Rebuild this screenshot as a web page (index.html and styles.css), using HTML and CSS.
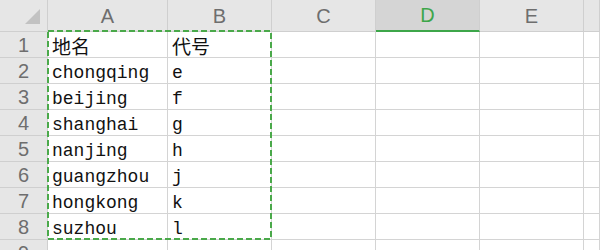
FILE: index.html
```html
<!DOCTYPE html>
<html lang="zh">
  <head>
    <meta charset="UTF-8" />
    <title>Sheet</title>
    <link rel="stylesheet" href="styles.css">
  </head>
  <body>
    <div class="sheet">
      <div class="grid">
        <div class="corner"><span class="corner-mark"></span></div>
        <div class="col-head">A</div>
        <div class="col-head">B</div>
        <div class="col-head">C</div>
        <div class="col-head active">D</div>
        <div class="col-head">E</div>
        <div class="col-head"></div>

        <div class="row-head">1</div>
        <div class="cell cjk">地名</div><div class="cell cjk">代号</div>
        <div class="cell"></div><div class="cell"></div><div class="cell"></div><div class="cell"></div>

        <div class="row-head">2</div>
        <div class="cell">chongqing</div><div class="cell">e</div>
        <div class="cell"></div><div class="cell"></div><div class="cell"></div><div class="cell"></div>

        <div class="row-head">3</div>
        <div class="cell">beijing</div><div class="cell">f</div>
        <div class="cell"></div><div class="cell"></div><div class="cell"></div><div class="cell"></div>

        <div class="row-head">4</div>
        <div class="cell">shanghai</div><div class="cell">g</div>
        <div class="cell"></div><div class="cell"></div><div class="cell"></div><div class="cell"></div>

        <div class="row-head">5</div>
        <div class="cell">nanjing</div><div class="cell">h</div>
        <div class="cell"></div><div class="cell"></div><div class="cell"></div><div class="cell"></div>

        <div class="row-head">6</div>
        <div class="cell">guangzhou</div><div class="cell">j</div>
        <div class="cell"></div><div class="cell"></div><div class="cell"></div><div class="cell"></div>

        <div class="row-head">7</div>
        <div class="cell">hongkong</div><div class="cell">k</div>
        <div class="cell"></div><div class="cell"></div><div class="cell"></div><div class="cell"></div>

        <div class="row-head">8</div>
        <div class="cell">suzhou</div><div class="cell">l</div>
        <div class="cell"></div><div class="cell"></div><div class="cell"></div><div class="cell"></div>

        <div class="row-head">9</div>
        <div class="cell"></div><div class="cell"></div>
        <div class="cell"></div><div class="cell"></div><div class="cell"></div><div class="cell"></div>
      </div>

      <!-- copy marquee around A1:B8 -->
      <svg class="marquee" width="226" height="211" viewBox="0 0 226 211">
        <rect x="1" y="1" width="223" height="208" fill="none"
              stroke="#4aa94a" stroke-width="2" stroke-dasharray="6 3" />
      </svg>
    </div>
  </body>
</html>
```

FILE: styles.css
```css
body {
  margin: 0;
  background: #ffffff;
  overflow: hidden;
}

.sheet {
  position: relative;
  width: 600px;
  height: 250px;
  overflow: hidden;
}

.grid {
  display: grid;
  grid-template-columns: 48px 120px 104px 104px 104px 104px 16px;
  grid-template-rows: 32px repeat(9, 26px);
}

.corner,
.col-head,
.row-head {
  box-sizing: border-box;
  background: #e6e6e6;
  color: #6e6e6e;
  font-family: "Liberation Sans", Arial, sans-serif;
  font-size: 20px;
  border-right: 1px solid #cfcfcf;
  border-bottom: 1px solid #cfcfcf;
  display: flex;
  align-items: center;
  justify-content: center;
}

.corner {
  position: relative;
}

.corner-mark {
  position: absolute;
  left: 25px;
  top: 9px;
  width: 0;
  height: 0;
  border-left: 15px solid transparent;
  border-bottom: 15px solid #c2c2c2;
}

.col-head {
  padding-top: 1px;
}

.col-head.active {
  background: #d5d5d5;
  color: #3da64a;
  border-bottom: 2px solid #3da64a;
}

.row-head {
  padding-top: 1px;
}

.cell {
  box-sizing: border-box;
  border-right: 1px solid #d4d4d4;
  border-bottom: 1px solid #d4d4d4;
  padding: 3px 0 0 4px;
  font-family: "Liberation Mono", "Noto Sans CJK SC", monospace;
  font-size: 18px;
  color: #111111;
  line-height: 24px;
  white-space: nowrap;
}

.cell.cjk {
  font-family: "Noto Sans CJK SC", sans-serif;
  font-size: 19px;
  padding-top: 2px;
  line-height: 24px;
}

.marquee {
  position: absolute;
  left: 47px;
  top: 30px;
}
```
